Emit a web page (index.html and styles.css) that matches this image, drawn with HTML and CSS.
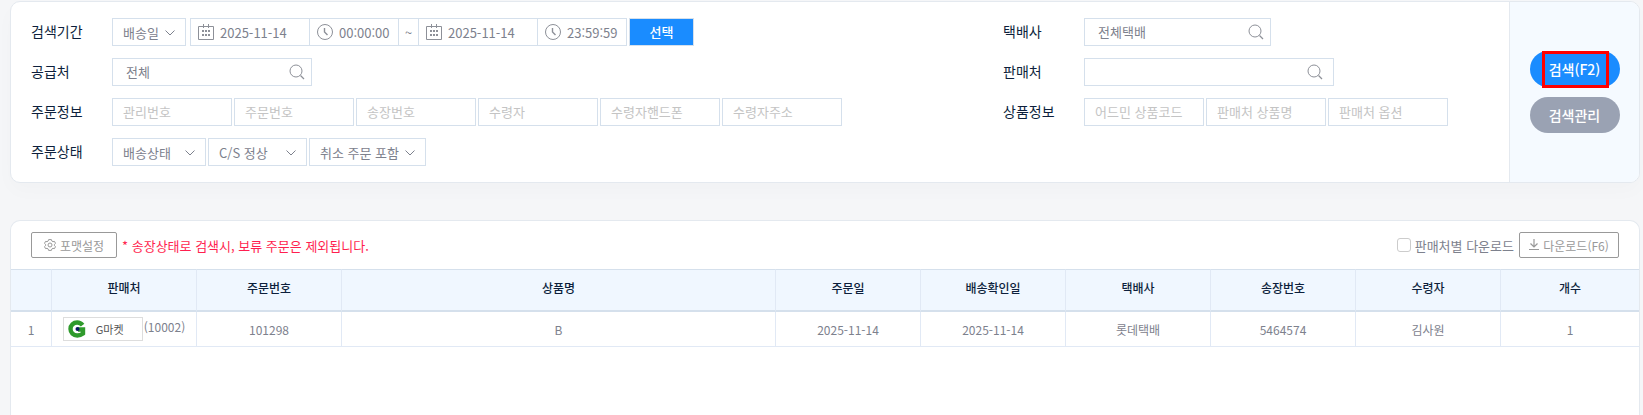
FILE: index.html
```html
<!DOCTYPE html>
<html lang="ko">

<head>
    <meta charset="UTF-8">
    <meta name="viewport" content="width=device-width, initial-scale=1.0">
    <title>배송 조회</title>
    <link rel="stylesheet" href="styles.css">
</head>

<body>
    <svg class="sprite" aria-hidden="true">
        <symbol id="icon-calendar" viewBox="0 0 16 16">
            <path d="M.5 2.5h15v13H.5zM5.5 0v4M10.5 0v4" fill="none" stroke="currentColor" />
            <path d="M4 6h2v2H4zM7 6h2v2H7zM10 6h2v2h-2zM4 10h2v2H4zM7 10h2v2H7zM10 10h2v2h-2z" fill="currentColor" />
        </symbol>
        <symbol id="icon-clock" viewBox="0 0 16 16">
            <circle cx="8" cy="8" r="7.5" fill="none" stroke="currentColor" />
            <path d="M7.5 4v4l3 3" fill="none" stroke="currentColor" stroke-width="1.4" />
        </symbol>
        <symbol id="icon-search" viewBox="0 0 16 16">
            <circle cx="7" cy="7" r="6" fill="none" stroke="currentColor" />
            <path d="M11.5 11.5l3.5 3.5" fill="none" stroke="currentColor" stroke-width="1.3" />
        </symbol>
        <symbol id="icon-arrow" viewBox="0 0 10 6">
            <path d="M.5.5L5 5 9.5.5" fill="none" stroke="currentColor" />
        </symbol>
        <symbol id="icon-gear" viewBox="0 0 12 12">
            <path d="M4.6.6h2.8l.5 1.500 1 .6 1.600-.3 1 2-1.100 1v1.200l1.100 1-1 2-1.600-.3-1 .6-.5 1.500H4.600l-.5-1.500-1-.6-1.600.3-1-2 1.100-1V5.400L.5 4.400l1-2 1.600.3 1-.6z" fill="none" stroke="currentColor" stroke-linejoin="round" />
            <circle cx="6" cy="6" r="2" fill="none" stroke="currentColor" />
        </symbol>
        <symbol id="icon-download" viewBox="0 0 10 12">
            <path d="M5 0v8M1.5 4.5L5 8l3.5-3.5M0 10.5h10" fill="none" stroke="currentColor" stroke-width="1.2" />
        </symbol>
    </svg>

    <form class="panel search-wrap">
        <div class="search-body">
            <div class="search-col">
                <div class="row">
                    <label class="row-title" for="dateType">검색기간</label>
                    <div class="period">
                        <span class="select-box date-type">
                            <select id="dateType">
                                <option>배송일</option>
                            </select>
                            <svg class="arrow"><use href="#icon-arrow" /></svg>
                        </span>
                        <div class="date-range">
                            <label class="date-box"><svg class="icon"><use href="#icon-calendar" /></svg><input type="text" value="2025-11-14" aria-label="시작일"></label>
                            <label class="time-box"><svg class="icon"><use href="#icon-clock" /></svg><input type="text" value="00:00:00" aria-label="시작시간"></label>
                            <span class="tilde">~</span>
                            <label class="date-box"><svg class="icon"><use href="#icon-calendar" /></svg><input type="text" value="2025-11-14" aria-label="종료일"></label>
                            <label class="time-box"><svg class="icon"><use href="#icon-clock" /></svg><input type="text" value="23:59:59" aria-label="종료시간"></label>
                        </div>
                        <button type="button" class="pick-btn">선택</button>
                    </div>
                </div>
                <div class="row">
                    <label class="row-title" for="supplier">공급처</label>
                    <div class="find-box supplier">
                        <input type="text" id="supplier" value="전체">
                        <svg class="icon"><use href="#icon-search" /></svg>
                    </div>
                </div>
                <div class="row">
                    <label class="row-title" for="orderInfo">주문정보</label>
                    <input type="text" class="text-box" id="orderInfo" placeholder="관리번호">
                    <input type="text" class="text-box" placeholder="주문번호" aria-label="주문번호">
                    <input type="text" class="text-box" placeholder="송장번호" aria-label="송장번호">
                    <input type="text" class="text-box" placeholder="수령자" aria-label="수령자">
                    <input type="text" class="text-box" placeholder="수령자핸드폰" aria-label="수령자핸드폰">
                    <input type="text" class="text-box" placeholder="수령자주소" aria-label="수령자주소">
                </div>
                <div class="row">
                    <label class="row-title" for="orderStatus">주문상태</label>
                    <span class="select-box order-status">
                        <select id="orderStatus">
                            <option>배송상태</option>
                        </select>
                        <svg class="arrow"><use href="#icon-arrow" /></svg>
                    </span>
                    <span class="select-box cs-status">
                        <select aria-label="C/S 상태">
                            <option>C/S 정상</option>
                        </select>
                        <svg class="arrow"><use href="#icon-arrow" /></svg>
                    </span>
                    <span class="select-box cancel-status">
                        <select aria-label="취소 주문">
                            <option>취소 주문 포함</option>
                        </select>
                        <svg class="arrow"><use href="#icon-arrow" /></svg>
                    </span>
                </div>
            </div>
            <div class="search-col">
                <div class="row">
                    <label class="row-title" for="courier">택배사</label>
                    <div class="find-box courier">
                        <input type="text" id="courier" value="전체택배">
                        <svg class="icon"><use href="#icon-search" /></svg>
                    </div>
                </div>
                <div class="row">
                    <label class="row-title" for="seller">판매처</label>
                    <div class="find-box seller">
                        <input type="text" id="seller">
                        <svg class="icon"><use href="#icon-search" /></svg>
                    </div>
                </div>
                <div class="row">
                    <label class="row-title" for="productInfo">상품정보</label>
                    <input type="text" class="text-box" id="productInfo" placeholder="어드민 상품코드">
                    <input type="text" class="text-box" placeholder="판매처 상품명" aria-label="판매처 상품명">
                    <input type="text" class="text-box" placeholder="판매처 옵션" aria-label="판매처 옵션">
                </div>
            </div>
        </div>
        <div class="search-side">
            <button type="submit" class="side-btn primary">검색(F2)<span class="mark"></span></button>
            <button type="button" class="side-btn">검색관리</button>
        </div>
    </form>

    <section class="panel list-wrap">
        <div class="list-head">
            <button type="button" class="line-btn"><svg class="gear"><use href="#icon-gear" /></svg>포맷설정</button>
            <p class="notice">* 송장상태로 검색시, 보류 주문은 제외됩니다.</p>
            <label class="check"><input type="checkbox">판매처별 다운로드</label>
            <button type="button" class="line-btn download-btn"><svg class="down"><use href="#icon-download" /></svg>다운로드(F6)</button>
        </div>
        <table class="list-table">
            <colgroup>
                <col class="col-no">
                <col class="col">
                <col class="col">
                <col>
                <col class="col">
                <col class="col">
                <col class="col">
                <col class="col">
                <col class="col">
                <col class="col-qty">
            </colgroup>
            <thead>
                <tr>
                    <th></th>
                    <th>판매처</th>
                    <th>주문번호</th>
                    <th>상품명</th>
                    <th>주문일</th>
                    <th>배송확인일</th>
                    <th>택배사</th>
                    <th>송장번호</th>
                    <th>수령자</th>
                    <th>개수</th>
                </tr>
            </thead>
            <tbody>
                <tr>
                    <td>1</td>
                    <td>
                        <div class="shop">
                            <span class="shop-logo">
                                <svg class="shop-mark" viewBox="0 0 18 18">
                                    <path d="M14.6 5.2C13.2 3.400 11.400 2.500 9.200 2.500 5.400 2.500 2.500 5.300 2.500 9s2.900 6.500 6.700 6.500c2.400 0 4.300-.8 5.800-2V9.500H10" fill="none" stroke="#2f9a2c" stroke-width="4.4" />
                                    <circle cx="9.5" cy="9" r="2" fill="#0b1560" />
                                </svg>
                                G마켓
                            </span>
                            <span class="shop-code">(10002)</span>
                        </div>
                    </td>
                    <td>101298</td>
                    <td>B</td>
                    <td>2025-11-14</td>
                    <td>2025-11-14</td>
                    <td>롯데택배</td>
                    <td>5464574</td>
                    <td>김사원</td>
                    <td>1</td>
                </tr>
            </tbody>
        </table>
    </section>
</body>

</html>
```
FILE: styles.css
```css
* {
    box-sizing: border-box;
}

body {
    display: flex;
    flex-direction: column;
    min-height: 100vh;
    margin: 0;
    padding: 1px 3px 0 10px;
    background-color: #f5f6f8;
    color: #7d818d;
    font-family: "Noto Sans CJK KR", sans-serif;
    font-size: 13px;
}

input,
select,
button {
    margin: 0;
    border: 0;
    font: inherit;
    color: inherit;
}

.sprite {
    display: none;
}

.panel {
    background-color: #fff;
    border: 1px solid #e4e9ef;
    border-radius: 10px;
    overflow: hidden;
}

/* search */
.search-wrap {
    display: flex;
    margin-bottom: 37px;
    box-shadow: 0 8px 20px rgba(0, 0, 0, .02);
}

.search-body {
    flex: 1;
    display: grid;
    grid-template-columns: 972fr 526fr;
    padding: 16px 0;
}

.search-col {
    display: flex;
    flex-direction: column;
    gap: 12px;
    padding-left: 20px;
}

.row {
    display: flex;
    align-items: center;
    gap: 2px;
    height: 28px;
}

.row-title {
    width: 79px;
    padding-bottom: 2px;
    color: #0d1f3c;
    font-size: 14px;
}

.select-box,
.find-box,
.text-box,
.date-range {
    height: 28px;
    border: 1px solid #d5e0ec;
    background-color: #fff;
}

.select-box {
    position: relative;
}

.select-box select {
    appearance: none;
    width: 100%;
    height: 100%;
    padding: 0 10px;
    background: none;
}

.arrow {
    position: absolute;
    top: 11px;
    right: 10px;
    width: 10px;
    height: 6px;
    pointer-events: none;
}

.period {
    display: flex;
    gap: 2px;
}

.date-type {
    width: 74px;
    margin-right: 2px;
}

.order-status {
    width: 94px;
}

.cs-status {
    width: 99px;
}

.cancel-status {
    width: 117px;
}

.date-range {
    display: flex;
}

.date-box,
.time-box,
.tilde {
    display: flex;
    align-items: center;
}

.date-box,
.time-box {
    gap: 6px;
    padding-left: 7px;
    border-right: 1px solid #d5e0ec;
}

.date-box {
    width: 119px;
}

.time-box {
    width: 89px;
}

.time-box:last-child {
    width: 88px;
    border-right: 0;
}

.tilde {
    justify-content: center;
    width: 20px;
    border-right: 1px solid #d5e0ec;
}

.date-range input {
    flex: 1;
    min-width: 0;
    padding: 0;
}

.icon {
    flex: none;
    width: 16px;
    height: 16px;
    color: #8d9098;
}

.pick-btn {
    width: 65px;
    height: 28px;
    padding: 0 0 2px;
    border: 1px solid #d5e0ec;
    background-color: #1a8cff;
    color: #fff;
    font-weight: 500;
}

.find-box {
    display: flex;
    align-items: center;
    padding: 0 6px 0 13px;
}

.find-box input {
    flex: 1;
    min-width: 0;
    padding: 0 0 2px;
    background: none;
}

.supplier {
    width: 200px;
}

.courier {
    width: 187px;
}

.seller {
    width: 250px;
    padding-right: 10px;
}

.text-box {
    width: 120px;
    padding: 0 10px 2px;
}

.text-box::placeholder {
    color: #c4c4c4;
}

.search-side {
    display: flex;
    flex-direction: column;
    align-items: center;
    justify-content: center;
    gap: 10px;
    width: 130px;
    border-left: 1px solid #e4e9ef;
    background-color: #f5faff;
}

.side-btn {
    position: relative;
    width: 90px;
    height: 36px;
    padding: 0;
    border-radius: 18px;
    background-color: #9aa2b3;
    color: #fff;
    font-size: 14px;
    font-weight: 500;
}

.side-btn.primary {
    background-color: #1a8cff;
}

.mark {
    position: absolute;
    inset: 0 11px -1px 12px;
    border: 3px solid #f00;
}

/* list */
.list-wrap {
    flex: 1;
    border-bottom: 0;
    border-radius: 10px 10px 0 0;
}

.list-head {
    display: flex;
    align-items: center;
    padding: 11px 20px;
}

.line-btn {
    display: flex;
    align-items: center;
    justify-content: center;
    gap: 4px;
    width: 86px;
    height: 26px;
    padding: 0;
    border: 1px solid #999;
    border-radius: 2px;
    background-color: #fff;
    color: #999;
    font-size: 12px;
}

.download-btn {
    width: 100px;
}

.gear {
    width: 12px;
    height: 12px;
}

.down {
    width: 10px;
    height: 12px;
}

.notice {
    margin: 0 auto 0 5px;
    color: #ff1f4f;
}

.check {
    display: flex;
    align-items: center;
    gap: 4px;
    margin-right: 5px;
}

.check input {
    appearance: none;
    width: 14px;
    height: 14px;
    border: 1px solid #ccc;
    border-radius: 3px;
    background-color: #fff;
}

.list-table {
    table-layout: fixed;
    width: 100%;
    border-spacing: 0;
    font-size: 12px;
    text-align: center;
}

.col-no {
    width: 41px;
}

.col {
    width: 145px;
}

.col-qty {
    width: 138px;
}

.list-table th {
    height: 43px;
    padding: 0 0 6px;
    border-top: 1px solid #d5e0ec;
    border-bottom: 2px solid #d5e0ec;
    border-right: 1px solid #e1e9f5;
    background-color: #f0f7ff;
    color: #0d1f3c;
    font-weight: 500;
}

.list-table td {
    height: 35px;
    padding: 0;
    border-bottom: 1px solid #e1e9f5;
    border-right: 1px solid #e1e9f5;
}

.list-table th:last-child,
.list-table td:last-child {
    border-right: 0;
}

.shop {
    display: flex;
    justify-content: center;
    gap: 1px;
    line-height: 20px;
}

.shop-logo {
    display: flex;
    align-items: center;
    gap: 10px;
    width: 80px;
    height: 24px;
    padding-left: 4px;
    border: 1px solid #ddd;
    color: #555;
    font-size: 11px;
}

.shop-mark {
    width: 18px;
    height: 18px;
}
```
